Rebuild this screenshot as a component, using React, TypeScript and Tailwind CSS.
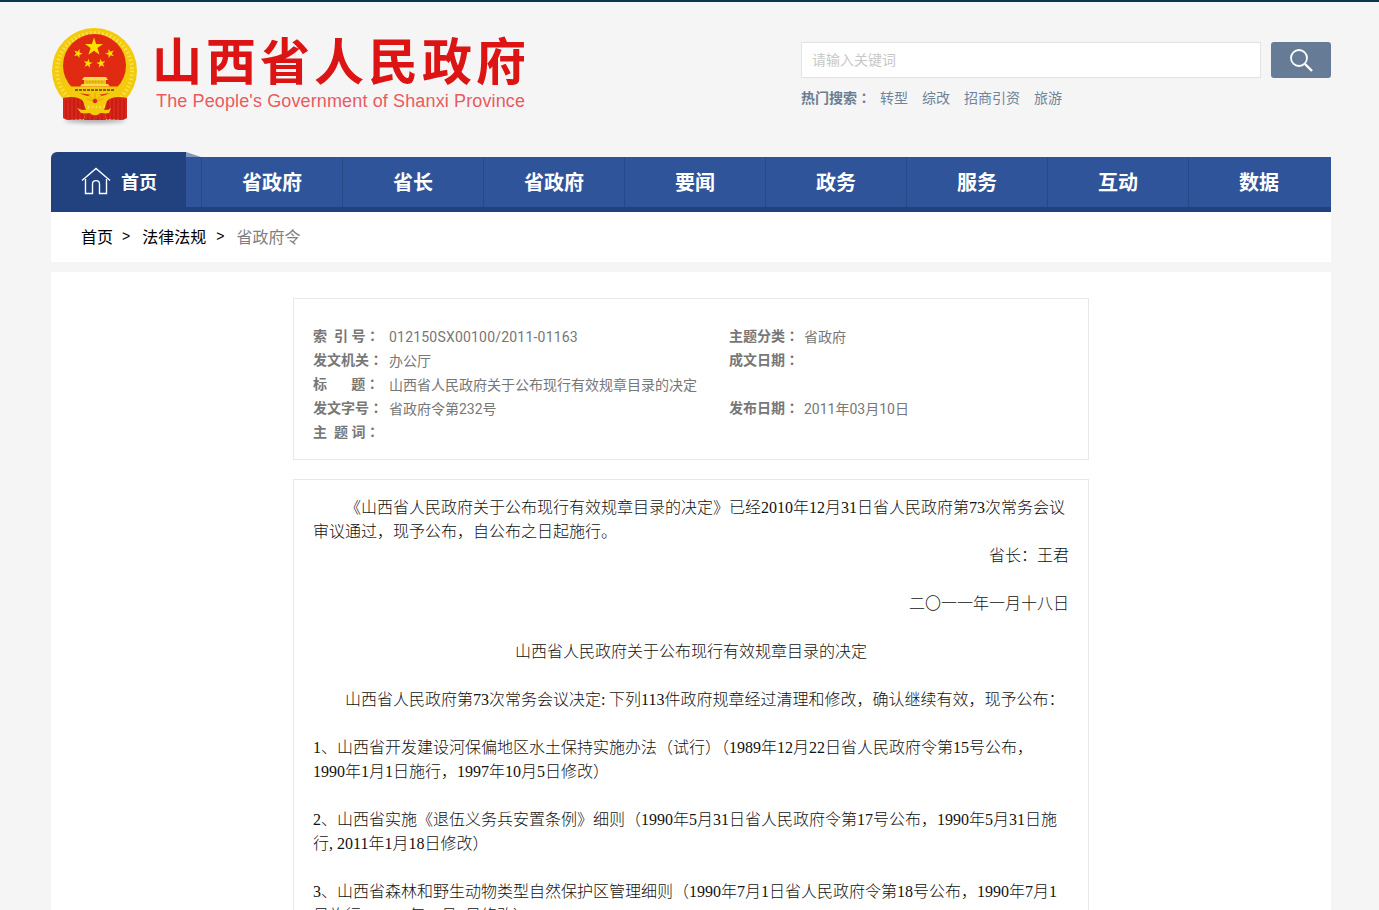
import React from "react";

const CJK = "font-['Noto_Sans_CJK_SC','Noto_Sans_CJK_JP',sans-serif]";

function Star({ cx, cy, r, rot = 0 }: { cx: number; cy: number; r: number; rot?: number }) {
  const pts: string[] = [];
  for (let i = 0; i < 10; i++) {
    const a = ((-90 + rot + i * 36) * Math.PI) / 180;
    const rr = i % 2 === 0 ? r : r * 0.382;
    pts.push(`${(cx + rr * Math.cos(a)).toFixed(2)},${(cy + rr * Math.sin(a)).toFixed(2)}`);
  }
  return <polygon points={pts.join(" ")} fill="#ffe000" />;
}

function Emblem() {
  return (
    <svg width="90" height="100" viewBox="0 0 90 100" className="shrink-0">
      <defs>
        <filter id="b" x="-30%" y="-100%" width="160%" height="300%">
          <feGaussianBlur stdDeviation="2" />
        </filter>
      </defs>
      <ellipse cx="45" cy="94" rx="30" ry="3" fill="#aaa" filter="url(#b)" />
      {/* wheat ring */}
      <circle cx="44.5" cy="44.5" r="42.5" fill="#f3cb0c" />
      <circle cx="44.5" cy="44.5" r="37.5" fill="none" stroke="#f9e04e" strokeWidth="4" strokeDasharray="1.6 2.4" />
      {/* red disc */}
      <circle cx="44.5" cy="39.5" r="31.5" fill="#e02a12" />
      <Star cx={44} cy={21} r={9.5} />
      <Star cx={28} cy={27.5} r={4.8} rot={20} />
      <Star cx={60} cy={27.5} r={4.8} rot={-20} />
      <Star cx={38} cy={37.5} r={4.8} rot={10} />
      <Star cx={51} cy={37.5} r={4.8} rot={-10} />
      {/* gate */}
      <path d="M34 51 L56 51 L58 54 L32 54 Z" fill="#f8dc50" />
      <rect x="34" y="54" width="22" height="4" fill="#efc21a" />
      <path d="M36 56 H54" stroke="#b98a10" strokeWidth="1" strokeDasharray="1.5 1.5" />
      <path d="M32 58 H58 L60 60.5 H30 Z" fill="#f8dc50" />
      {/* platform */}
      <path d="M21 60.5 H68 L70 67 C60 66 54 69 45 69 C36 69 30 66 19 68 Z" fill="#f3cb0c" />
      <path d="M25 64 H65" stroke="#5e4210" strokeWidth="1.3" strokeDasharray="3 1" />
      {/* ribbons */}
      <path d="M13 72 C22 70 29 71 33 75 L36 84 L34 93 L17 94 L13 92 Z" fill="#d8261a" />
      <path d="M77 72 C68 70 61 71 57 75 L54 84 L56 93 L73 94 L77 92 Z" fill="#d8261a" />
      <path d="M35 84 H55 L56 94 H34 Z" fill="#d8261a" />
      <path
        d="M16 74 V93 M20 73 V94 M24 72 V94 M28 73 V94 M32 75 V94 M58 75 V94 M62 73 V94 M66 72 V94 M70 73 V94 M74 74 V93 M38 89 V94 M42 90 V94 M48 90 V94 M52 89 V94"
        stroke="#b8140e"
        strokeWidth="0.9"
      />
      {/* gear */}
      <path d="M36 76 A9 9 0 0 1 54 76 L51 78 H39 Z" fill="#f3cb0c" />
      <path d="M45 67 V76 M39 69.5 L45 76 M51 69.5 L45 76 M36.5 72.5 L45 76 M53.5 72.5 L45 76" stroke="#e79a10" strokeWidth="0.9" />
      <circle cx="45" cy="75" r="2.2" fill="#e02a12" />
      {/* bow */}
      <path d="M27 82 C32 85 37 84 40 82 H50 C53 84 58 85 61 82 L59 87 C55 88 52 87 50 87 C48 90 42 90 40 87 C38 87 35 88 31 87 Z" fill="#f3cb0c" />
    </svg>
  );
}

/* Half-width latin runs, like a Song face: 8px per character at 16px */
function Mixed({ text }: { text: string }) {
  const parts = text.split(/(\d+|[:,])/);
  return (
    <>
      {parts.map((p, i) =>
        /^\d+$/.test(p) ? (
          <span key={i} className="font-['Liberation_Serif',serif]">
            {p}
          </span>
        ) : /^[:,]$/.test(p) ? (
          <span key={i} className="inline-block w-2 font-['Liberation_Serif',serif]">
            {p}
          </span>
        ) : (
          <span key={i}>{p}</span>
        )
      )}
    </>
  );
}

const navItems = ["省政府", "省长", "省政府", "要闻", "政务", "服务", "互动", "数据"];

/* Full-width colon centred in its cell */
const Colon = () => <span className="font-['Noto_Sans_CJK_TC',sans-serif]">：</span>;

function InfoLabel({ text, width = "w-[76px]" }: { text: string; width?: string }) {
  return (
    <span className={width + " -mt-[2px] shrink-0 font-bold whitespace-pre"}>
      {text}
      <Colon />
    </span>
  );
}

function InfoRow({
  left,
  leftValue,
  right,
  rightValue,
}: {
  left: string;
  leftValue?: React.ReactNode;
  right?: string;
  rightValue?: string;
}) {
  return (
    <div className="flex h-6 items-center">
      <div className="flex w-[416px] items-center whitespace-nowrap">
        <InfoLabel text={left} />
        <span className="mt-[1px]">{leftValue}</span>
      </div>
      {right && (
        <div className="flex items-center whitespace-nowrap">
          <InfoLabel text={right} width="w-[75px]" />
          <span className="mt-[1px]">{rightValue}</span>
        </div>
      )}
    </div>
  );
}

const L = ({ text, className = "" }: { text: string; className?: string }) => (
  <div className={"h-6 whitespace-nowrap leading-6 " + className}>
    <Mixed text={text} />
  </div>
);

export default function App() {
  return (
    <div className={"h-[910px] overflow-hidden border-t-2 border-[#0b3550] bg-[#f5f5f5] " + CJK}>
      <div className="ml-[51px] w-[1280px]">
        <header className="flex h-[150px] items-start justify-between">
          <div className="flex items-start">
            <div className="-ml-[1px] mt-[24px]">
              <Emblem />
            </div>
            <div className="ml-[12px] mt-[26px] flex flex-col">
              <div className="h-[60px] text-[50px] font-bold leading-[60px] tracking-[4px] whitespace-nowrap text-[#dc1414]">
                山西省人民政府
              </div>
              <div className="mt-[2px] ml-[4px] font-['Liberation_Sans',sans-serif] text-[18px] leading-[22px] tracking-[0.13px] whitespace-nowrap text-[#ea5a5e]">
                The People's Government of Shanxi Province
              </div>
            </div>
          </div>
          <div className="mt-[40px] w-[530px]">
            <div className="flex justify-between">
              <input
                placeholder="请输入关键词"
                className="h-9 w-[460px] border border-[#e3e3e3] bg-white px-[10px] pb-[2px] text-sm outline-none placeholder:text-[#c8c8c8]"
              />
              <button className="flex h-9 w-[60px] items-center justify-center rounded-[3px] bg-[#667c96]">
                <svg width="24" height="24" viewBox="0 0 24 24" fill="none" stroke="#fff" strokeWidth="1.8">
                  <circle cx="10" cy="10" r="8" />
                  <path d="M16 16 L23 23" strokeWidth="2.4" />
                </svg>
              </button>
            </div>
            <div className="mt-[9px] flex h-5 items-center text-sm leading-5 whitespace-nowrap text-[#6f8499]">
              <span className="w-[79px] font-bold text-[#6b7d90]">
                热门搜索
                <Colon />
              </span>
              <span className="flex gap-[14px]">
                <span>转型</span>
                <span>综改</span>
                <span>招商引资</span>
                <span>旅游</span>
              </span>
            </div>
          </div>
        </header>

        <nav className="relative flex h-[60px] items-end">
          <div className="flex h-[60px] w-[135px] items-center rounded-tl-md bg-[#21417f] pb-[3px] pl-[30px] text-white">
            <svg width="30" height="28" viewBox="0 0 30 28" fill="none" stroke="#fff" strokeWidth="1.4" className="shrink-0">
              <path d="M1 13.5 L15 1.5 L29 13.5" />
              <path d="M4.5 12 V26.5 H11.5 V17 C11.5 12.5 18.5 12.5 18.5 17 V26.5 H25.5 V12" />
            </svg>
            <span className="ml-[10px] text-[18px] font-bold leading-none">首页</span>
          </div>
          <div className="flex h-[55px] flex-1 flex-col bg-[#2f5499]">
            <div className="flex h-[50px]">
              <div className="w-[16px] shrink-0 border-r border-[#26498a]" />
              {navItems.map((t, i) => (
                <div
                  key={i}
                  className="flex w-[141px] items-center justify-center border-r border-[#26498a] text-xl font-bold text-white last:w-[140px] last:border-r-0"
                >
                  {t}
                </div>
              ))}
            </div>
            <div className="h-[5px] bg-[#21417f]" />
          </div>
          <div className="absolute left-[135px] top-0 h-0 w-0 border-b-[5px] border-r-[15px] border-b-[#8097c0] border-r-transparent" />
        </nav>

        <div className="flex h-[50px] items-center bg-white pb-[2px] pl-[30px] text-base whitespace-nowrap">
          <span className="text-black">首页</span>
          <span className="ml-[9px] font-['Liberation_Sans',sans-serif] text-sm text-black">&gt;</span>
          <span className="ml-[12px] text-black">法律法规</span>
          <span className="ml-[10px] font-['Liberation_Sans',sans-serif] text-sm text-black">&gt;</span>
          <span className="ml-[12px] text-[#808080]">省政府令</span>
        </div>

        <main className="mt-[10px] h-[700px] bg-white pt-[26px] pl-[242px]">
          <section className="h-[162px] w-[796px] border border-[#e8e8e8] px-[19px] pt-[25px] font-['Roboto','Noto_Sans_CJK_SC',sans-serif] text-sm text-[#777]">
            <InfoRow
              left={"索  引 号"}
              leftValue={<span className="tracking-[0.2px]">012150SX00100/2011-01163</span>}
              right="主题分类"
              rightValue="省政府"
            />
            <InfoRow left="发文机关" leftValue="办公厅" right="成文日期" />
            <InfoRow left={"标       题"} leftValue="山西省人民政府关于公布现行有效规章目录的决定" />
            <InfoRow left="发文字号" leftValue="省政府令第232号" right="发布日期" rightValue="2011年03月10日" />
            <InfoRow left={"主  题 词"} />
          </section>

          <article className="mt-[19px] h-[500px] w-[796px] border border-[#e8e8e8] px-[19px] pt-[14px] text-base font-light text-[#111]">
            <L className="pl-[32px]" text="《山西省人民政府关于公布现行有效规章目录的决定》已经2010年12月31日省人民政府第73次常务会议" />
            <L text="审议通过，现予公布，自公布之日起施行。" />
            <L className="text-right" text="省长：王君" />
            <div className="h-6" />
            <L className="text-right" text="二〇一一年一月十八日" />
            <div className="h-6" />
            <L className="text-center" text="山西省人民政府关于公布现行有效规章目录的决定" />
            <div className="h-6" />
            <L className="pl-[32px]" text="山西省人民政府第73次常务会议决定:下列113件政府规章经过清理和修改，确认继续有效，现予公布：" />
            <div className="h-6" />
            <L text="1、山西省开发建设河保偏地区水土保持实施办法（试行）（1989年12月22日省人民政府令第15号公布，" />
            <L text="1990年1月1日施行，1997年10月5日修改）" />
            <div className="h-6" />
            <L text="2、山西省实施《退伍义务兵安置条例》细则（1990年5月31日省人民政府令第17号公布，1990年5月31日施" />
            <L text="行,2011年1月18日修改）" />
            <div className="h-6" />
            <L text="3、山西省森林和野生动物类型自然保护区管理细则（1990年7月1日省人民政府令第18号公布，1990年7月1" />
            <L text="日施行，1997年10月5日修改）" />
          </article>
        </main>
      </div>
    </div>
  );
}
